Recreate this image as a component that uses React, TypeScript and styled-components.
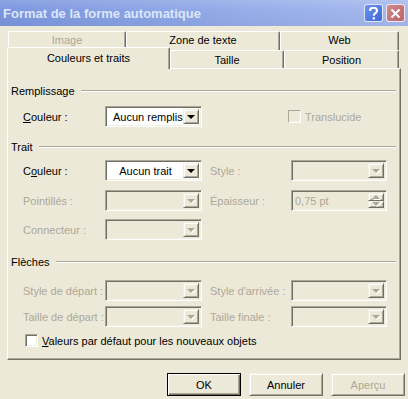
import React from "react";
import styled, { createGlobalStyle } from "styled-components";

const GlobalStyle = createGlobalStyle`
  html, body {
    margin: 0;
    padding: 0;
    background: #ece9d8;
  }
  body {
    font-family: "Liberation Sans", Arial, sans-serif;
    font-size: 11px;
    color: #000;
  }
`;

const Window = styled.div`
  width: 408px;
  height: 399px;
  overflow: hidden;
  background: #ece9d8;
  display: flex;
  flex-direction: column;
`;

const TitleBar = styled.div`
  height: 26px;
  flex-shrink: 0;
  box-sizing: border-box;
  display: flex;
  align-items: center;
  padding: 0 3px 0 3px;
  background: linear-gradient(
      to bottom,
      rgba(255, 255, 255, 0.14),
      rgba(255, 255, 255, 0) 45%,
      rgba(0, 0, 0, 0.03)
    ),
    linear-gradient(to right, #7a95de, #94ace8 60%, #a6b9ee);
`;

const Title = styled.div`
  flex: 1;
  font: bold 13px "Liberation Sans", Arial, sans-serif;
  color: #dce6f8;
  padding-top: 1px;
`;

const CaptionButton = styled.div<{ $kind: "help" | "close" }>`
  width: 19px;
  height: 18px;
  margin-left: 3px;
  box-sizing: border-box;
  border: 1px solid rgba(255, 255, 255, 0.8);
  border-radius: 3px;
  display: flex;
  align-items: center;
  justify-content: center;
  background: ${(p) =>
    p.$kind === "help"
      ? "linear-gradient(135deg, #6d93ee, #3d68d8)"
      : "linear-gradient(135deg, #d08a8c, #b8666a)"};
`;

const Body = styled.div`
  padding: 5px 7px 0 7px;
  display: flex;
  flex-direction: column;
`;

const Tabs = styled.div`
  display: flex;
  flex-direction: column;
`;

const TabRow = styled.div<{ $front?: boolean }>`
  display: flex;
  align-items: flex-start;
  height: ${(p) => (p.$front ? 22 : 19)}px;
  margin: ${(p) => (p.$front ? "-3px 0 -1px 0" : "0 0 0 1px")};
`;

const Tab = styled.div<{ $w: number; $selected?: boolean; $disabled?: boolean; $back?: boolean }>`
  width: ${(p) => p.$w}px;
  height: ${(p) => (p.$selected ? 22 : p.$back ? 19 : 18)}px;
  margin-top: ${(p) => (p.$selected || p.$back ? 0 : 3)}px;
  box-sizing: border-box;
  display: flex;
  align-items: center;
  justify-content: center;
  padding-bottom: ${(p) => (p.$selected ? 2 : p.$back ? 2 : 0)}px;
  background: #ece9d8;
  border-top: 1px solid #fff;
  border-left: 1px solid #fff;
  border-right: 1px solid #716f64;
  box-shadow: inset -1px 0 #aca899;
  border-radius: 2px 2px 0 0;
  color: ${(p) => (p.$disabled ? "#aca899" : "#000")};
  position: relative;
  z-index: ${(p) => (p.$selected ? 2 : 1)};
  white-space: nowrap;
`;

const Panel = styled.div`
  height: 292px;
  box-sizing: border-box;
  border-top: 1px solid #fff;
  border-left: 1px solid #fff;
  border-right: 1px solid #716f64;
  border-bottom: 1px solid #716f64;
  box-shadow: inset -1px -1px #aca899;
  padding: 15px 0 0 0;
  display: flex;
  flex-direction: column;
`;

const Heading = styled.div<{ $mt?: number }>`
  display: flex;
  align-items: center;
  height: 13px;
  margin: ${(p) => p.$mt ?? 0}px 4px 0 3px;
  gap: 6px;
  &::after {
    content: "";
    flex: 1;
    height: 0;
    border-top: 1px solid #aca899;
    border-bottom: 1px solid #fff;
  }
`;

const Row = styled.div<{ $mt: number }>`
  display: grid;
  grid-template-columns: 82px 97px 89px 96px;
  align-items: center;
  height: 21px;
  margin-top: ${(p) => p.$mt}px;
  padding-left: 15px;
`;

const Label = styled.div<{ $disabled?: boolean; $pad?: number }>`
  color: ${(p) => (p.$disabled ? "#aca899" : "#000")};
  padding-left: ${(p) => p.$pad ?? 0}px;
  white-space: nowrap;
`;

const Sunken = styled.div<{ $disabled?: boolean }>`
  height: 21px;
  box-sizing: border-box;
  display: flex;
  align-items: stretch;
  border: 1px solid;
  border-color: #aca899 #fff #fff #aca899;
  box-shadow: inset 1px 1px #716f64, inset -1px -1px #f1efe2;
  background: ${(p) => (p.$disabled ? "#ece9d8" : "#fff")};
  padding: 2px;
`;

const ComboText = styled.div<{ $center?: boolean; $disabled?: boolean }>`
  flex: 1;
  overflow: hidden;
  white-space: nowrap;
  display: flex;
  align-items: center;
  justify-content: ${(p) => (p.$center ? "center" : "flex-start")};
  padding-left: ${(p) => (p.$center ? 0 : 5)}px;
  color: ${(p) => (p.$disabled ? "#aca899" : "#000")};
`;

const Raised = styled.div`
  box-sizing: border-box;
  background: #ece9d8;
  border: 1px solid;
  border-color: #f1efe2 #716f64 #716f64 #f1efe2;
  box-shadow: inset 1px 1px #fff, inset -1px -1px #aca899;
  display: flex;
  align-items: center;
  justify-content: center;
`;

const DropButton = styled(Raised)`
  width: 16px;
`;

const SpinColumn = styled.div`
  width: 16px;
  display: flex;
  flex-direction: column;
  & > div {
    flex: 1;
  }
`;

const Arrow = styled.div<{ $disabled?: boolean; $up?: boolean }>`
  width: 0;
  height: 0;
  border-left: 4px solid transparent;
  border-right: 4px solid transparent;
  ${(p) =>
    p.$up
      ? `border-bottom: 4px solid ${p.$disabled ? "#aca899" : "#000"};`
      : `border-top: 4px solid ${p.$disabled ? "#aca899" : "#000"};`}
  filter: ${(p) => (p.$disabled ? "drop-shadow(1px 1px 0 #fff)" : "none")};
`;

const CheckBox = styled.div<{ $disabled?: boolean }>`
  width: 13px;
  height: 13px;
  box-sizing: border-box;
  border: 1px solid;
  border-color: #aca899 #fff #fff #aca899;
  box-shadow: inset 1px 1px #716f64, inset -1px -1px #f1efe2;
  background: ${(p) => (p.$disabled ? "#ece9d8" : "#fff")};
  ${(p) => (p.$disabled ? "box-shadow: inset -1px -1px #f1efe2;" : "")}
  flex-shrink: 0;
`;

const CheckLine = styled.div<{ $disabled?: boolean; $indent: number; $span?: boolean; $mt?: number }>`
  display: flex;
  align-items: center;
  gap: 4px;
  padding-left: ${(p) => p.$indent}px;
  margin-top: ${(p) => p.$mt ?? 0}px;
  grid-column: ${(p) => (p.$span ? "3 / 5" : "auto")};
  color: ${(p) => (p.$disabled ? "#aca899" : "#000")};
`;

const ButtonBar = styled.div`
  display: flex;
  justify-content: flex-end;
  gap: 8px;
  margin: 13px -4px 0 0;
`;

const PushButton = styled(Raised)<{ $default?: boolean; $disabled?: boolean }>`
  width: 74px;
  height: 23px;
  color: ${(p) => (p.$disabled ? "#aca899" : "#000")};
  ${(p) =>
    p.$default
      ? `border-color: #000; box-shadow: inset 1px 1px #fff, inset -1px -1px #716f64, inset -2px -2px #aca899;`
      : ""}
`;

type ComboProps = { text?: string; center?: boolean; disabled?: boolean };

const Combo = ({ text, center, disabled }: ComboProps) => (
  <Sunken $disabled={disabled}>
    <ComboText $center={center} $disabled={disabled}>
      {text}
    </ComboText>
    <DropButton>
      <Arrow $disabled={disabled} />
    </DropButton>
  </Sunken>
);

const Spinner = ({ text }: { text: string }) => (
  <Sunken $disabled>
    <ComboText $disabled style={{ paddingLeft: 1 }}>
      {text}
    </ComboText>
    <SpinColumn>
      <Raised>
        <Arrow $up $disabled />
      </Raised>
      <Raised>
        <Arrow $disabled />
      </Raised>
    </SpinColumn>
  </Sunken>
);

const HelpGlyph = () => (
  <svg width="11" height="13" viewBox="0 0 11 13">
    <path
      d="M2 4 C2 1.5 3.8 0.8 5.5 0.8 C7.5 0.8 9 2 9 3.8 C9 5.6 7.6 6 6.6 6.8 C6 7.3 5.8 7.8 5.8 8.8"
      fill="none"
      stroke="#fff"
      strokeWidth="2"
    />
    <rect x="4.7" y="10.2" width="2.2" height="2.2" fill="#fff" />
  </svg>
);

const CloseGlyph = () => (
  <svg width="11" height="11" viewBox="0 0 11 11">
    <path d="M1.5 1.5 L9.5 9.5 M9.5 1.5 L1.5 9.5" stroke="#fff" strokeWidth="2" />
  </svg>
);

const App = () => {
  return (
    <Window>
      <GlobalStyle />
      <TitleBar>
        <Title>Format de la forme automatique</Title>
        <CaptionButton $kind="help">
          <HelpGlyph />
        </CaptionButton>
        <CaptionButton $kind="close">
          <CloseGlyph />
        </CaptionButton>
      </TitleBar>
      <Body>
        <Tabs>
          <TabRow>
            <Tab $w={118} $back $disabled>
              Image
            </Tab>
            <Tab $w={154} $back>
              Zone de texte
            </Tab>
            <Tab $w={119} $back>
              Web
            </Tab>
          </TabRow>
          <TabRow $front>
            <Tab $w={163} $selected>
              Couleurs et traits
            </Tab>
            <Tab $w={114}>Taille</Tab>
            <Tab $w={115}>Position</Tab>
          </TabRow>
        </Tabs>
        <Panel>
          <Heading>Remplissage</Heading>
          <Row $mt={9}>
            <Label>
              <u>C</u>ouleur :
            </Label>
            <Combo text="Aucun remplissage" />
            <CheckLine $disabled $indent={86} $span>
              <CheckBox $disabled />
              Translucide
            </CheckLine>
          </Row>

          <Heading $mt={13}>Trait</Heading>
          <Row $mt={7}>
            <Label>
              C<u>o</u>uleur :
            </Label>
            <Combo text="Aucun trait" center />
            <Label $disabled $pad={8}>
              Style :
            </Label>
            <Combo disabled />
          </Row>
          <Row $mt={9}>
            <Label $disabled>Pointillés :</Label>
            <Combo disabled />
            <Label $disabled $pad={8}>
              Épaisseur :
            </Label>
            <Spinner text="0,75 pt" />
          </Row>
          <Row $mt={8}>
            <Label $disabled>Connecteur :</Label>
            <Combo disabled />
          </Row>

          <Heading $mt={15}>Flèches</Heading>
          <Row $mt={12}>
            <Label $disabled>Style de départ :</Label>
            <Combo disabled />
            <Label $disabled $pad={8}>
              Style d'arrivée :
            </Label>
            <Combo disabled />
          </Row>
          <Row $mt={5}>
            <Label $disabled>Taille de départ :</Label>
            <Combo disabled />
            <Label $disabled $pad={8}>
              Taille finale :
            </Label>
            <Combo disabled />
          </Row>
          <CheckLine $indent={17} $mt={7}>
            <CheckBox />
            <span>
              <u>V</u>aleurs par défaut pour les nouveaux objets
            </span>
          </CheckLine>
        </Panel>
        <ButtonBar>
          <PushButton $default>OK</PushButton>
          <PushButton>Annuler</PushButton>
          <PushButton $disabled>Aperçu</PushButton>
        </ButtonBar>
      </Body>
    </Window>
  );
};

export default App;
